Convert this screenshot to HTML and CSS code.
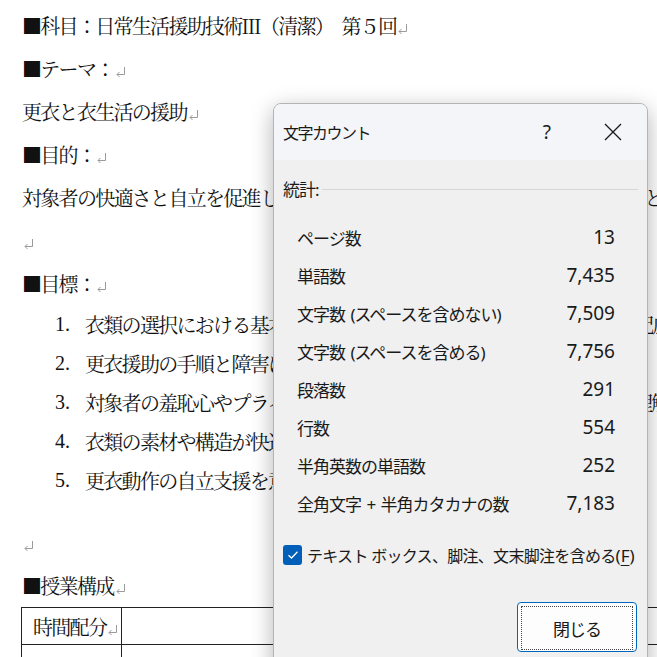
FILE: index.html
```html
<!DOCTYPE html>
<html>
  <head>
    <meta charset="utf-8">
    <title>文字カウント</title>
    <link rel="stylesheet" href="styles.css">
  </head>
  <body>
    <div class="page">
      <div class="doc">
        <p>■科目：日常生活援助技術Ⅲ（清潔）　第５回<svg class="ret" viewBox="0 0 11 12"><path d="M9.5 1 V8.5 H2 M4.5 6 L2 8.5 L4.5 11"/></svg></p>
        <p>■テーマ：<svg class="ret" viewBox="0 0 11 12"><path d="M9.5 1 V8.5 H2 M4.5 6 L2 8.5 L4.5 11"/></svg></p>
        <p>更衣と衣生活の援助<svg class="ret" viewBox="0 0 11 12"><path d="M9.5 1 V8.5 H2 M4.5 6 L2 8.5 L4.5 11"/></svg></p>
        <p>■目的：<svg class="ret" viewBox="0 0 11 12"><path d="M9.5 1 V8.5 H2 M4.5 6 L2 8.5 L4.5 11"/></svg></p>
        <p>対象者の快適さと自立を促進し、尊厳を保持した更衣援助を行うための知識と技術を習得する。</p>
        <p><svg class="ret" viewBox="0 0 11 12"><path d="M9.5 1 V8.5 H2 M4.5 6 L2 8.5 L4.5 11"/></svg></p>
        <p>■目標：<svg class="ret" viewBox="0 0 11 12"><path d="M9.5 1 V8.5 H2 M4.5 6 L2 8.5 L4.5 11"/></svg></p>
        <ol class="goals">
          <li><span class="num">1.</span>衣類の選択における基本的な知識を理解し、対象者の好みや体調に配慮した衣類を選択できる。</li>
          <li><span class="num">2.</span>更衣援助の手順と障害に応じた介助方法を習得する。</li>
          <li><span class="num">3.</span>対象者の羞恥心やプライバシーに十分配慮した援助の意義と方法を理解し、実践できる。</li>
          <li><span class="num">4.</span>衣類の素材や構造が快適性に与える影響を説明できる。</li>
          <li><span class="num">5.</span>更衣動作の自立支援を意識した援助を実践できる。</li>
        </ol>
        <p class="gap"><svg class="ret" viewBox="0 0 11 12"><path d="M9.5 1 V8.5 H2 M4.5 6 L2 8.5 L4.5 11"/></svg></p>
        <p>■授業構成<svg class="ret" viewBox="0 0 11 12"><path d="M9.5 1 V8.5 H2 M4.5 6 L2 8.5 L4.5 11"/></svg></p>
        <table class="plan">
          <tr>
            <td class="time">時間配分<svg class="ret" viewBox="0 0 11 12"><path d="M9.5 1 V8.5 H2 M4.5 6 L2 8.5 L4.5 11"/></svg></td>
            <td></td>
          </tr>
          <tr>
            <td></td>
            <td></td>
          </tr>
        </table>
      </div>

      <div class="dialog">
        <div class="title">
          <span class="title-text">文字カウント</span>
          <span class="help">?</span>
          <svg class="close" width="18" height="18" viewBox="0 0 18 18">
            <path d="M1 1 L17 17 M17 1 L1 17" stroke="#1a1a1a" stroke-width="1.3" fill="none"/>
          </svg>
        </div>
        <div class="dlg-body">
          <div class="section">
            <span>統計:</span>
            <span class="rule"></span>
          </div>
          <div class="stats">
            <div class="row"><span>ページ数</span><span class="val">13</span></div>
            <div class="row"><span>単語数</span><span class="val">7,435</span></div>
            <div class="row"><span>文字数 (スペースを含めない)</span><span class="val">7,509</span></div>
            <div class="row"><span>文字数 (スペースを含める)</span><span class="val">7,756</span></div>
            <div class="row"><span>段落数</span><span class="val">291</span></div>
            <div class="row"><span>行数</span><span class="val">554</span></div>
            <div class="row"><span>半角英数の単語数</span><span class="val">252</span></div>
            <div class="row"><span>全角文字 + 半角カタカナの数</span><span class="val">7,183</span></div>
          </div>
          <label class="check">
            <span class="box">
              <svg width="12" height="10" viewBox="0 0 12 10">
                <path d="M1.5 5.2 L4.5 8 L10.5 1.8" stroke="#fff" stroke-width="1.3" fill="none"/>
              </svg>
            </span>
            <span class="check-text">テキスト ボックス、脚注、文末脚注を含める<span class="key">(<u>F</u>)</span></span>
          </label>
          <div class="actions">
            <button class="btn"><span>閉じる</span></button>
          </div>
        </div>
      </div>
    </div>
  </body>
</html>
```

FILE: styles.css
```css
body, html {
    margin: 0;
    padding: 0;
    background: #fff;
    overflow: hidden;
}

.page {
    position: relative;
    width: 657px;
    height: 657px;
    overflow: hidden;
}

.doc {
    padding: 4px 0 0 22px;
    font-family: "Noto Serif CJK JP", "Noto Sans CJK JP", serif;
    font-size: 20px;
    letter-spacing: -1.7px;
    color: #111;
}

.doc p {
    margin: 0;
    height: 43px;
    line-height: 43px;
    white-space: nowrap;
}

.doc p.gap {
    margin-top: 21px;
}

.ret {
    width: 11px;
    height: 12px;
    margin-left: 1px;
    vertical-align: -1px;
    fill: none;
    stroke: #9a9a9a;
    stroke-width: 1;
}

.goals {
    list-style: none;
    margin: 0;
    padding: 0 0 0 33px;
}

.goals li {
    display: flex;
    height: 39px;
    line-height: 39px;
    white-space: nowrap;
}

.goals .num {
    width: 30px;
    flex: none;
    font-family: "Liberation Serif", serif;
    font-size: 20px;
    letter-spacing: 0;
}

.plan {
    border-collapse: collapse;
    margin-left: -1px;
    width: 720px;
}

.plan td {
    border: 1px solid #222;
    height: 36px;
    padding: 0 0 0 11px;
    white-space: nowrap;
}

.plan td.time {
    width: 88px;
}

/* word count dialog */

.dialog {
    position: absolute;
    left: 273px;
    top: 103px;
    width: 375px;
    height: 600px;
    box-sizing: border-box;
    border: 1px solid #b4b4b4;
    border-radius: 8px;
    background: #f0f0f0;
    box-shadow: 0 6px 22px rgba(0, 0, 0, 0.3);
    font-family: "Noto Sans", "Noto Sans CJK JP", sans-serif;
    font-size: 17px;
    letter-spacing: -1px;
    word-spacing: 2px;
    color: #1a1a1a;
    overflow: hidden;
}

.title {
    display: flex;
    align-items: center;
    height: 56px;
    padding: 0 25px 0 9px;
    background: #f3f5f8;
}

.title-text {
    font-size: 16px;
    letter-spacing: -1.5px;
}

.help {
    margin-left: auto;
    margin-right: 53px;
    font-size: 19px;
    letter-spacing: 0;
}

.dlg-body {
    padding: 16px 0 0 9px;
}

.section {
    display: flex;
    align-items: center;
    height: 24px;
    padding-right: 9px;
}

.rule {
    flex: 1;
    height: 1px;
    margin-left: 3px;
    margin-top: 2px;
    background: #d6d6d6;
}

.stats {
    margin-top: 18px;
    padding: 0 32px 0 14px;
}

.row {
    display: flex;
    justify-content: space-between;
    align-items: center;
    height: 38px;
}

.val {
    font-size: 19px;
    letter-spacing: 0;
}

.check {
    display: flex;
    align-items: center;
    height: 24px;
    margin-top: 21px;
}

.check-text {
    font-size: 16px;
    letter-spacing: -0.7px;
    word-spacing: 0;
}

.check-text .key {
    font-size: 17px;
    letter-spacing: 0;
}

.box {
    display: flex;
    align-items: center;
    justify-content: center;
    width: 19px;
    height: 20px;
    margin-right: 5px;
    border-radius: 3px;
    background: #005fb8;
}

.check u {
    text-underline-offset: 3px;
}

.actions {
    display: flex;
    justify-content: flex-end;
    margin-top: 35px;
    padding-right: 10px;
}

.btn {
    width: 120px;
    height: 50px;
    padding: 3px;
    border: 1px solid #0067c0;
    border-radius: 4px;
    background: #fdfdfd;
    font: inherit;
    letter-spacing: -1px;
    color: #1a1a1a;
}

.btn span {
    display: flex;
    align-items: center;
    justify-content: center;
    height: 100%;
    border: 1px dotted #444;
}
```
